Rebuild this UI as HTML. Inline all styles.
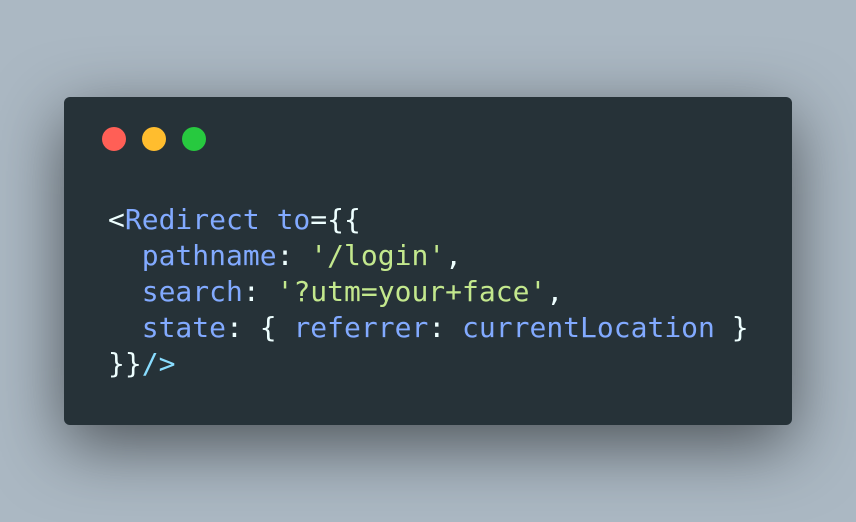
<!DOCTYPE html><html><head><style>
body{margin:0;width:856px;height:522px;background:#abb8c3;position:relative;overflow:hidden}
.w{position:absolute;left:64px;top:97px;width:728px;height:328px;background:#263238;border-radius:6px;box-shadow:0 20px 68px rgba(0,0,0,.55)}
.d{position:absolute;top:30px;width:24px;height:24px;border-radius:50%}
pre{position:absolute;left:44px;top:104.5px;margin:0;font:28px/36px "DejaVu Sans Mono",monospace;color:#eeffff}
.b{color:#82aaff}.g{color:#c3e88d}.c{color:#89ddff}
</style></head><body><div class="w">
<div class="d" style="left:38px;background:#ff5f56"></div>
<div class="d" style="left:78px;background:#ffbd2e"></div>
<div class="d" style="left:118px;background:#27c93f"></div>
<pre>&lt;<span class="b">Redirect</span> <span class="b">to</span>={{
  <span class="b">pathname</span>: <span class="g">'/login'</span>,
  <span class="b">search</span>: <span class="g">'?utm=your+face'</span>,
  <span class="b">state</span>: { <span class="b">referrer</span>: <span class="b">currentLocation</span> }
}}<span class="c">/&gt;</span></pre>
</div></body></html>
